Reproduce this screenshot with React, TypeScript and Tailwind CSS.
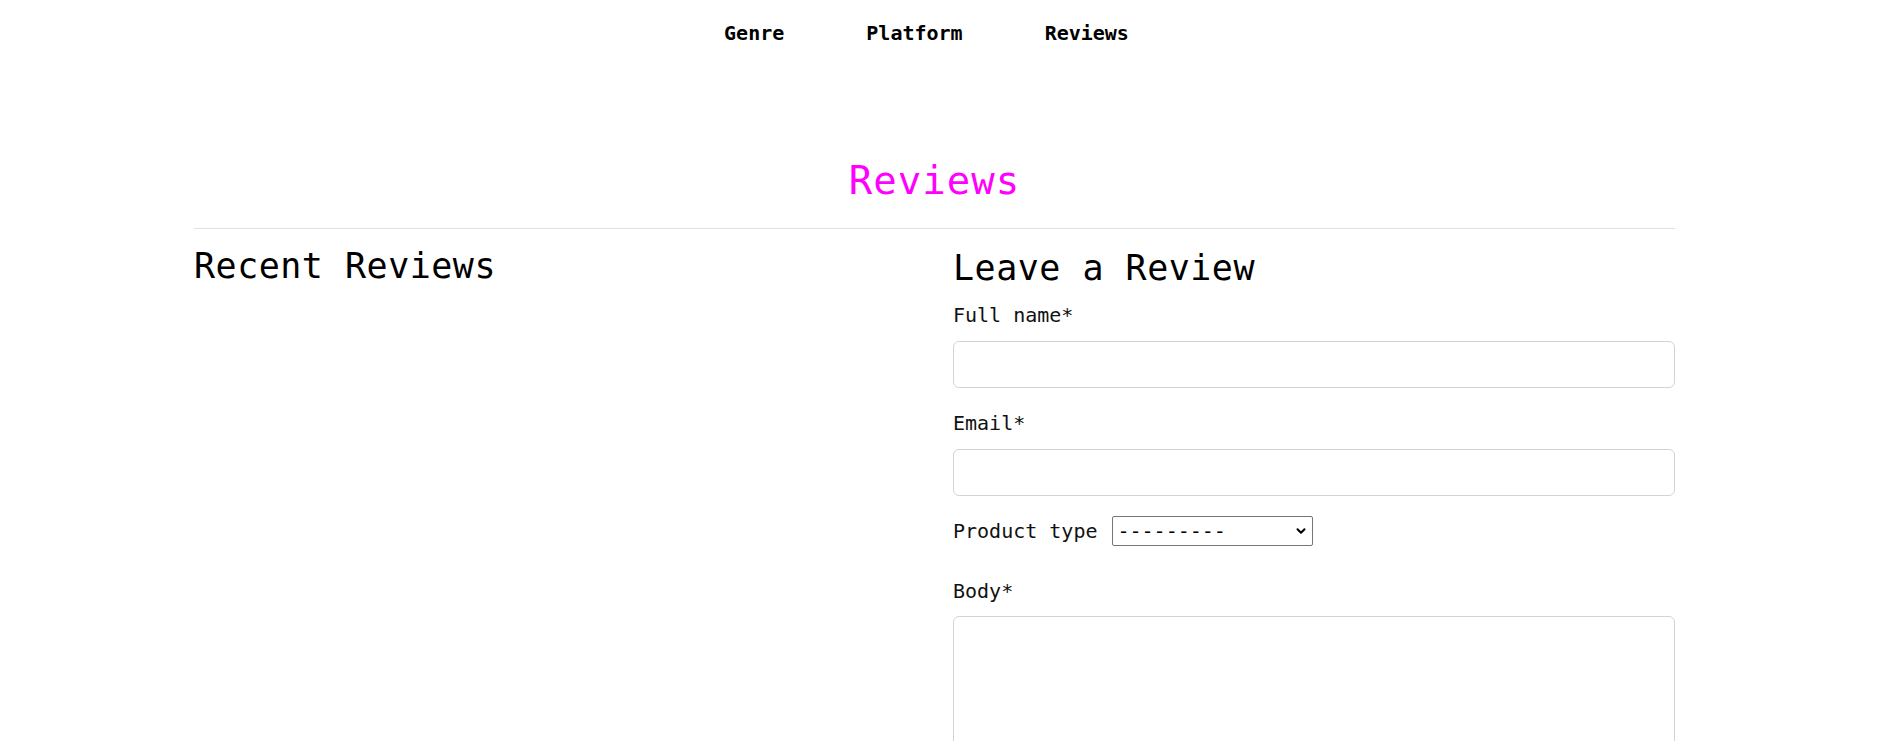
import { ChevronDown } from 'lucide-react';

function Field({ label, children }: { label: string; children: React.ReactNode }) {
  return (
    <div className="flex flex-col">
      <label className="text-[20px] leading-[24px] text-[#111]">{label}</label>
      {children}
    </div>
  );
}

export default function App() {
  return (
    <div className="min-h-screen w-full bg-white font-['DejaVu_Sans_Mono',_monospace] text-black">
      <nav className="flex justify-center gap-[82px] pr-[30px] pt-[21px] text-[20px] font-bold leading-[24px]">
        <a href="#">Genre</a>
        <a href="#">Platform</a>
        <a href="#">Reviews</a>
      </nav>

      <main className="ml-[194px] w-[1481px]">
        <h1 className="mt-[112px] text-center text-[39px] leading-[48px] tracking-[1px] text-[#f0f]">Reviews</h1>
        <hr className="mt-[23px] border-t border-[#e0e0e0]" />

        <div className="grid grid-cols-[759px_722px]">
          <section>
            <h2 className="mt-[15px] text-[35px] leading-[44px] tracking-[0.5px]">Recent Reviews</h2>
          </section>

          <section className="flex flex-col">
            <h2 className="mt-[17px] text-[35px] leading-[44px] tracking-[0.5px]">Leave a Review</h2>

            <div className="mt-[13px]">
              <Field label="Full name*">
                <input className="mt-[14px] h-[47px] w-full rounded-md border border-[#ced4da] px-3" />
              </Field>
            </div>

            <div className="mt-[23px]">
              <Field label="Email*">
                <input className="mt-[14px] h-[47px] w-full rounded-md border border-[#ced4da] px-3" />
              </Field>
            </div>

            <div className="mt-[20px] flex items-center gap-[14px]">
              <label className="text-[20px] leading-[24px] text-[#111]">Product type</label>
              <div className="relative">
                <select className="h-[30px] w-[201px] appearance-none rounded-[2px] border border-[#767676] pl-[5px] text-[20px] leading-[24px]">
                  <option>---------</option>
                </select>
                <ChevronDown className="pointer-events-none absolute right-[5px] top-[8px] h-[14px] w-[14px]" strokeWidth={3.5} />
              </div>
            </div>

            <div className="mt-[33px]">
              <Field label="Body*">
                <textarea className="mt-[13px] h-[220px] w-full resize-none rounded-md border border-[#ced4da] px-3" />
              </Field>
            </div>
          </section>
        </div>
      </main>
    </div>
  );
}
